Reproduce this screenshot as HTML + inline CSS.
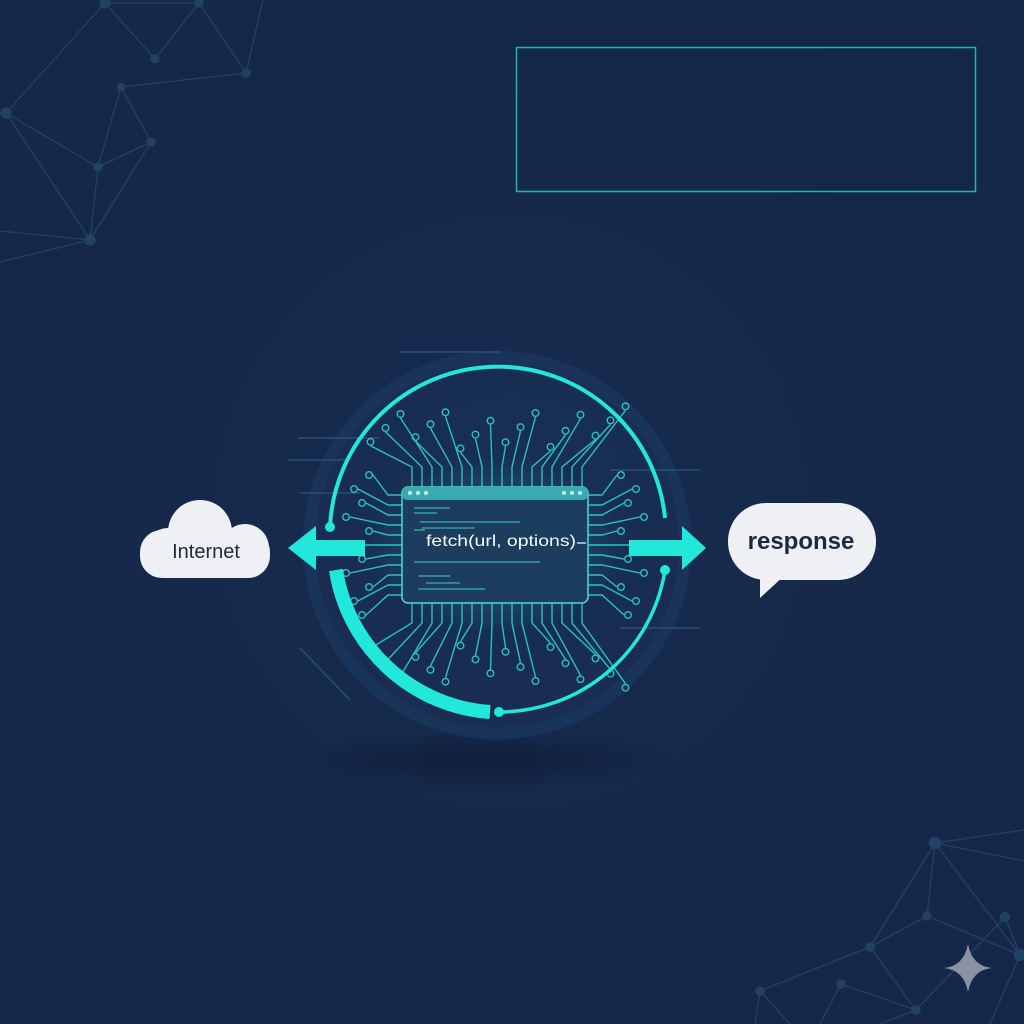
<!DOCTYPE html>
<html><head><meta charset="utf-8"><style>
html,body{margin:0;padding:0;background:#162849;}
body{width:1024px;height:1024px;overflow:hidden;position:relative;font-family:"Liberation Sans",sans-serif;}
svg{position:absolute;left:0;top:0;}
</style></head><body>
<svg width="1024" height="1024" viewBox="0 0 1024 1024" xmlns="http://www.w3.org/2000/svg">
<defs>
<radialGradient id="bg" cx="0.5" cy="0.5" r="0.7"><stop offset="0" stop-color="#172b4f"/><stop offset="1" stop-color="#152747"/></radialGradient>
<radialGradient id="glow" cx="0.5" cy="0.5" r="0.5"><stop offset="0" stop-color="#3fe8e0" stop-opacity="0.3"/><stop offset="1" stop-color="#3fe8e0" stop-opacity="0"/></radialGradient>
<radialGradient id="shadow" cx="0.5" cy="0.5" r="0.5"><stop offset="0" stop-color="#0c1830" stop-opacity="0.7"/><stop offset="1" stop-color="#0c1830" stop-opacity="0"/></radialGradient>
</defs>
<rect width="1024" height="1024" fill="url(#bg)"/>
<g stroke="#24476a" stroke-width="1.3" fill="#24476a" opacity="0.85">
<line x1="105" y1="3" x2="6" y2="113"/><line x1="105" y1="3" x2="199" y2="3"/><line x1="105" y1="3" x2="155" y2="59"/><line x1="155" y1="59" x2="199" y2="3"/><line x1="199" y1="3" x2="246" y2="73"/><line x1="246" y1="73" x2="263" y2="0"/><line x1="246" y1="73" x2="121" y2="87"/><line x1="121" y1="87" x2="151" y2="142"/><line x1="121" y1="87" x2="98" y2="167"/><line x1="6" y1="113" x2="98" y2="167"/><line x1="98" y1="167" x2="151" y2="142"/><line x1="6" y1="113" x2="90" y2="240"/><line x1="98" y1="167" x2="90" y2="240"/><line x1="151" y1="142" x2="90" y2="240"/><line x1="0" y1="231" x2="90" y2="240"/><line x1="0" y1="262" x2="90" y2="240"/>
<circle cx="105" cy="3" r="5"/><circle cx="199" cy="3" r="4"/><circle cx="155" cy="59" r="4"/><circle cx="246" cy="73" r="4"/><circle cx="121" cy="87" r="3.5"/><circle cx="6" cy="113" r="5"/><circle cx="151" cy="142" r="4"/><circle cx="98" cy="167" r="4"/><circle cx="90" cy="240" r="5"/>
</g>
<g stroke="#24476a" stroke-width="1.3" fill="#24476a" opacity="0.85">
<line x1="935" y1="843" x2="1024" y2="830"/><line x1="935" y1="843" x2="1024" y2="861"/><line x1="935" y1="843" x2="927" y2="916"/><line x1="935" y1="843" x2="870" y2="947"/><line x1="935" y1="843" x2="1020" y2="955"/><line x1="927" y1="916" x2="870" y2="947"/><line x1="927" y1="916" x2="1020" y2="955"/><line x1="870" y1="947" x2="760" y2="991"/><line x1="870" y1="947" x2="916" y2="1010"/><line x1="1005" y1="917" x2="916" y2="1010"/><line x1="1005" y1="917" x2="1020" y2="955"/><line x1="841" y1="984" x2="916" y2="1010"/><line x1="841" y1="984" x2="820" y2="1024"/><line x1="760" y1="991" x2="755" y2="1024"/><line x1="760" y1="991" x2="790" y2="1024"/><line x1="1020" y1="955" x2="990" y2="1024"/><line x1="916" y1="1010" x2="880" y2="1024"/>
<circle cx="935" cy="843" r="5.5"/><circle cx="927" cy="916" r="4"/><circle cx="870" cy="947" r="4"/><circle cx="1005" cy="917" r="4.5"/><circle cx="1020" cy="955" r="5.5"/><circle cx="760" cy="991" r="4"/><circle cx="841" cy="984" r="4"/><circle cx="916" cy="1010" r="4"/>
</g>
<path d="M968 944 Q972 966 992 968 Q972 970 968 992 Q964 970 944 968 Q964 966 968 944Z" fill="#8a93a6"/>
<rect x="516.5" y="47.5" width="459" height="144" fill="none" stroke="#1fb3b6" stroke-width="1.5"/>
<ellipse cx="480" cy="760" rx="200" ry="30" fill="url(#shadow)"/>
<circle cx="497" cy="545" r="195" fill="#1a355c" opacity="0.3"/>
<circle cx="497" cy="545" r="188" fill="none" stroke="#1c3b62" stroke-width="12" opacity="0.5"/>
<g stroke="#2a5278" stroke-width="2" opacity="0.7">
<line x1="298" y1="438" x2="380" y2="438"/><line x1="288" y1="460" x2="350" y2="460"/><line x1="300" y1="493" x2="360" y2="493"/><line x1="610" y1="470" x2="700" y2="470"/><line x1="620" y1="628" x2="700" y2="628"/><line x1="400" y1="352" x2="500" y2="352"/><line x1="300" y1="648" x2="350" y2="700"/>
</g>
<g id="circ" stroke="#2bc9c6" stroke-width="1.4" fill="none" opacity="0.95"></g>
<ellipse cx="495" cy="545" rx="130" ry="90" fill="url(#glow)"/>
<g fill="none" stroke="#22e8dc" stroke-linecap="butt">
<path d="M330 527 A168 168 0 0 1 665 518" stroke-width="4"/>
<path d="M665 570 A168 168 0 0 1 498 712" stroke-width="3.5"/>
<path d="M336 570 A168 168 0 0 0 490 712" stroke-width="14"/>
</g>
<circle cx="330" cy="527" r="5" fill="#22e8dc"/><circle cx="665" cy="570" r="5" fill="#22e8dc"/><circle cx="499" cy="712" r="5" fill="#22e8dc"/>
<path d="M288 548 L316 526 L316 540 L365 540 L365 556 L316 556 L316 570Z" fill="#22e8dc"/>
<path d="M629 540 L682 540 L682 526 L706 548 L682 570 L682 556 L629 556Z" fill="#22e8dc"/>
<rect x="402" y="487" width="186" height="116" rx="6" fill="#1c3d5e" stroke="#4fd8d6" stroke-width="1.5"/>
<rect x="402" y="487" width="186" height="13" rx="5" fill="#3aa9b0"/>
<g fill="#bff6f4"><circle cx="410" cy="493" r="2"/><circle cx="418" cy="493" r="2"/><circle cx="426" cy="493" r="2"/><circle cx="564" cy="493" r="2"/><circle cx="572" cy="493" r="2"/><circle cx="580" cy="493" r="2"/></g>
<g stroke="#43c9c4" stroke-width="1.3" opacity="0.8">
<line x1="414" y1="508" x2="450" y2="508"/><line x1="414" y1="513" x2="437" y2="513"/><line x1="420" y1="522" x2="520" y2="522"/><line x1="422" y1="528" x2="475" y2="528"/><line x1="414" y1="530" x2="425" y2="530"/><line x1="414" y1="562" x2="540" y2="562"/><line x1="418" y1="576" x2="450" y2="576"/><line x1="426" y1="583" x2="460" y2="583"/><line x1="418" y1="589" x2="485" y2="589"/>
</g>
<text x="426" y="546" font-size="16" fill="#f0fdff" textLength="150" lengthAdjust="spacingAndGlyphs">fetch(url, options)</text>
<line x1="577" y1="543" x2="586" y2="543" stroke="#eafcff" stroke-width="1.2"/>
<g fill="#eef0f3">
<circle cx="200" cy="532" r="32"/><circle cx="245" cy="548" r="24"/><circle cx="168" cy="550" r="22"/>
<rect x="140" y="530" width="130" height="48" rx="22"/>
</g>
<text x="206" y="558" font-size="20" fill="#1b2a44" text-anchor="middle">Internet</text>
<rect x="728" y="503" width="148" height="77" rx="38" fill="#eef0f3"/>
<path d="M760 570 L760 598 L785 575Z" fill="#eef0f3"/>
<text x="801" y="549" font-size="24" fill="#1b2a44" text-anchor="middle" font-weight="bold">response</text>
</svg>
<script>
(function(){
var g=document.getElementById('circ'),s='';
function tr(pts,end){var d='M'+pts.map(function(p){return p[0].toFixed(1)+' '+p[1].toFixed(1)}).join(' L');s+='<path d="'+d+'"/><circle cx="'+end[0].toFixed(1)+'" cy="'+end[1].toFixed(1)+'" r="3.3"/>';}
var cx=495,i;
for(i=0;i<18;i++){var x=412+i*10,k=(x-cx)/90,len=[40,55,70,48,62,75][i%6];
 var yEnd=487-len-Math.abs(k)*10;var dx=k*45;
 tr([[x,487],[x,467],[x+dx,yEnd+8]],[x+dx,yEnd+4]);
 tr([[x,603],[x,623],[x+dx,603+(487-yEnd)-4]],[x+dx,603+(487-yEnd)]);}
for(i=0;i<11;i++){var y=495+i*10,k2=(y-545)/55,len2=[35,50,42,58][i%4];
 var xe=402-len2;var dy=k2*22;
 tr([[402,y],[388,y],[xe+6,y+dy]],[xe+2,y+dy]);
 tr([[588,y],[602,y],[588+len2-6,y+dy]],[588+len2-2,y+dy]);}
g.innerHTML=s;
})();
</script>
</body></html>
